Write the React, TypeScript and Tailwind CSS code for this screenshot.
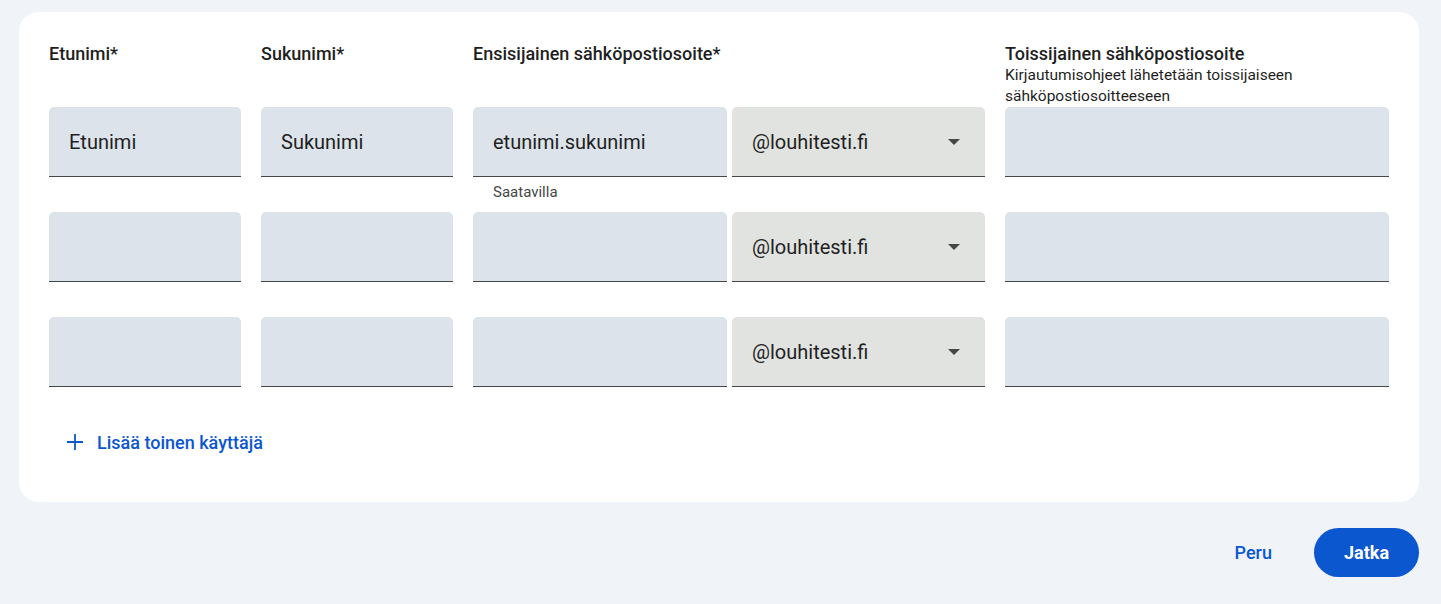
import React from 'react';

const FONT = { fontFamily: 'Roboto, "Noto Sans", sans-serif' };

const Field: React.FC<{ value?: string; className?: string }> = ({ value, className }) => (
  <div
    className={`h-[70px] bg-[#dde3ea] rounded-t-[5px] border-b border-[#444746] flex items-center px-5 text-[20px] text-[#1f1f1f] ${className || ''}`}
  >
    {value}
  </div>
);

const DomainSelect: React.FC = () => (
  <div className="h-[70px] w-[253px] bg-[#e1e3e1] rounded-t-[5px] border-b border-[#444746] flex items-center justify-between pl-5 pr-[25px] text-[20px] text-[#1f1f1f]">
    <span>@louhitesti.fi</span>
    <svg width="12" height="6" viewBox="0 0 12 6">
      <path d="M0 0 L12 0 L6 6 Z" fill="#444746" />
    </svg>
  </div>
);

const rows = [
  { first: 'Etunimi', last: 'Sukunimi', email: 'etunimi.sukunimi', helper: 'Saatavilla' },
  { first: '', last: '', email: '', helper: '' },
  { first: '', last: '', email: '', helper: '' },
];

const App: React.FC = () => {
  return (
    <div className="min-h-screen bg-[#f0f4f9] pt-[12px] pb-[28px]" style={FONT}>
      <div className="ml-[19px] w-[1400px] bg-white rounded-[20px] px-[30px] pt-[32px] pb-[40px]">
        <div className="grid grid-cols-[192px_192px_512px_384px] gap-x-5">
          {/* header */}
          <div className="text-[18px] font-medium text-[#1f1f1f] leading-5 h-[63px]">Etunimi*</div>
          <div className="text-[18px] font-medium text-[#1f1f1f] leading-5">Sukunimi*</div>
          <div className="text-[18px] font-medium text-[#1f1f1f] leading-5">Ensisijainen sähköpostiosoite*</div>
          <div className="h-[63px]">
            <div className="text-[18px] font-medium text-[#1f1f1f] leading-5">Toissijainen sähköpostiosoite</div>
            <div className="text-[15.5px] text-[#1f1f1f] leading-[21px] mt-[1px]">
              Kirjautumisohjeet lähetetään toissijaiseen sähköpostiosoitteeseen
            </div>
          </div>

          {rows.map((r, i) => (
            <React.Fragment key={i}>
              <div className="h-[105px]">
                <Field value={r.first} />
              </div>
              <div>
                <Field value={r.last} />
              </div>
              <div>
                <div className="flex gap-[5px]">
                  <Field value={r.email} className="w-[254px]" />
                  <DomainSelect />
                </div>
                {r.helper && (
                  <div className="pl-5 pt-[6px] text-[15px] leading-[18px] text-[#444746]">{r.helper}</div>
                )}
              </div>
              <div>
                <Field />
              </div>
            </React.Fragment>
          ))}
        </div>

        <button className="h-10 pl-[18px] pr-4 flex items-center gap-[14px] text-[#0b57d0] text-[18px] font-medium">
          <svg width="16" height="16" viewBox="0 0 16 16">
            <path d="M8 0 V16 M0 8 H16" stroke="#0b57d0" strokeWidth="1.8" />
          </svg>
          <span>Lisää toinen käyttäjä</span>
        </button>
      </div>

      <div className="ml-[19px] w-[1400px] flex justify-end items-center gap-[18px] mt-[26px]">
        <button className="h-12 px-6 text-[#0b57d0] text-[18px] font-medium">Peru</button>
        <button className="h-[49px] w-[105px] rounded-full bg-[#0b57d0] text-white text-[18px] font-bold">Jatka</button>
      </div>
    </div>
  );
};

export default App;
